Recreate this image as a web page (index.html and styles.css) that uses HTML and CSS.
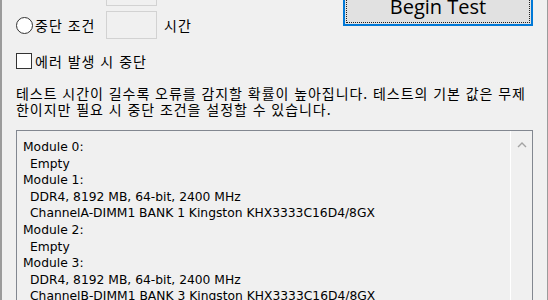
FILE: index.html
```html
<!DOCTYPE html>
<html lang="ko">
<head>
<meta charset="UTF-8" />
<meta name="viewport" content="width=device-width, initial-scale=1" />
<title>Memory Test</title>
<link rel="stylesheet" href="styles.css">
</head>
<body>
<div class="window">
  <div class="top">
    <div class="options">
      <div class="opt-row">
        <span></span>
        <span class="field"></span>
      </div>
      <label class="opt-row">
        <span class="choice"><span class="radio"></span>중단 조건</span>
        <span class="field"></span>
        <span class="unit">시간</span>
      </label>
      <label class="check-row">
        <span class="check"></span>에러 발생 시 중단
      </label>
    </div>
    <button class="begin">Begin Test</button>
  </div>

  <p class="desc">테스트 시간이 길수록 오류를 감지할 확률이 높아집니다. 테스트의 기본 값은 무제<br>한이지만 필요 시 중단 조건을 설정할 수 있습니다.</p>

  <div class="listbox">
    <div class="lines">
      <div>Module 0:</div>
      <div class="sub">Empty</div>
      <div>Module 1:</div>
      <div class="sub">DDR4, 8192 MB, 64-bit, 2400 MHz</div>
      <div class="sub">ChannelA-DIMM1 BANK 1 Kingston KHX3333C16D4/8GX</div>
      <div>Module 2:</div>
      <div class="sub">Empty</div>
      <div>Module 3:</div>
      <div class="sub">DDR4, 8192 MB, 64-bit, 2400 MHz</div>
      <div class="sub">ChannelB-DIMM1 BANK 3 Kingston KHX3333C16D4/8GX</div>
    </div>
    <div class="vscroll">
      <svg class="arrow" width="10" height="7" viewBox="0 0 10 7" aria-hidden="true">
        <path d="M1 6 L5 2 L9 6" fill="none" stroke="#a3a3a3" stroke-width="1.4" />
      </svg>
    </div>
  </div>
</div>
</body>
</html>
```

FILE: styles.css
```css
/* window chrome */
:root {
  --bg: #f0f0f0;
  --text: #000000;
  --frame: #9b9b9b;
  --accent: #0078d7;
}

*, *::before, *::after {
  box-sizing: border-box;
}

body {
  margin: 0;
  background: var(--bg);
  color: var(--text);
  font-family: "Noto Sans CJK KR", "Noto Sans", sans-serif;
}

.window {
  width: 548px;
  height: 300px;
  overflow: hidden;
  background: var(--bg);
  border-left: 2px solid var(--frame);
  border-right: 1px solid var(--frame);
  padding-left: 14px;
}

/* options + button */
.top {
  display: flex;
  align-items: flex-start;
  margin-top: -22px;
}

.options {
  display: flex;
  flex-direction: column;
  font-size: 14px;
  letter-spacing: 1px;
}

.opt-row {
  display: grid;
  grid-template-columns: 90px 51px auto;
  align-items: center;
  height: 28px;
}
.opt-row + .opt-row {
  margin-top: 5px;
}

.choice {
  display: flex;
  align-items: center;
  gap: 2px;
}

.radio {
  width: 17px;
  height: 17px;
  border: 1px solid #333;
  border-radius: 50%;
  background: #fff;
}

.field {
  height: 28px;
  border: 1px solid #d2d2d2;
  background: var(--bg);
}

.unit {
  margin-left: 7px;
}

.check-row {
  display: flex;
  align-items: center;
  gap: 3px;
  height: 16px;
  margin-top: 14px;
}

.check {
  width: 16px;
  height: 16px;
  border: 1px solid #333;
  background: #fff;
}

.begin {
  margin: 8px 14px 0 auto;
  width: 190px;
  height: 40px;
  border: 2px solid var(--accent);
  background: #e1e1e1;
  outline: 1px dotted #222;
  outline-offset: -4px;
  font-family: "Open Sans", sans-serif;
  font-size: 20px;
  color: #000;
  padding: 0;
}

/* description */
.desc {
  margin: 16px 0 0;
  font-size: 14px;
  line-height: 16px;
  letter-spacing: 0.95px;
  white-space: nowrap;
}

/* module list */
.listbox {
  display: flex;
  margin: 13px 14px 0 0;
  height: 200px;
  border: 1px solid #828790;
  background: var(--bg);
}

.lines {
  flex: 1;
  padding: 8px 0 0 6px;
  font-family: "DejaVu Sans", sans-serif;
  font-size: 12.3px;
  line-height: 16.6px;
  white-space: nowrap;
}

.lines .sub {
  padding-left: 7px;
}

.vscroll {
  width: 22px;
  border-left: 1px solid #ffffff;
  display: flex;
  justify-content: center;
  padding-top: 10px;
}

.arrow {
  display: block;
}
```
